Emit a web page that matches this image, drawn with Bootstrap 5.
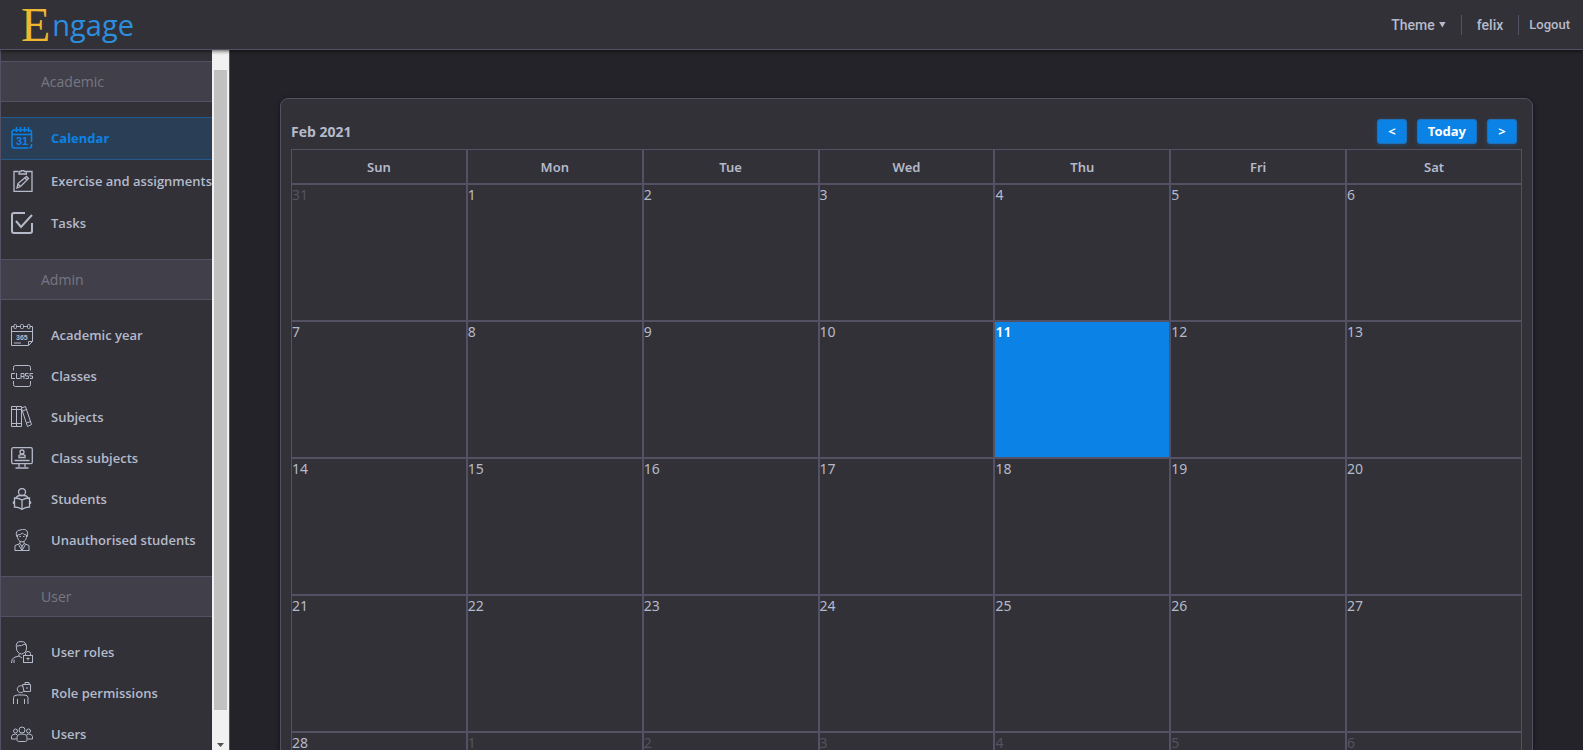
<!DOCTYPE html>
<html lang="en">
<head>
<meta charset="utf-8">
<meta name="viewport" content="width=device-width, initial-scale=1">
<title>Engage</title>
<link href="https://cdn.jsdelivr.net/npm/bootstrap@5.3.0/dist/css/bootstrap.min.css" rel="stylesheet">
<style>
:root{--panel:#323137;--page:#242329;--band:#41404a;--line:#545164;--ink:#b5bacb;--dim:#777782;--blue:#0b82e6}
body{background:var(--page);color:var(--ink);font-family:"Noto Sans",sans-serif;font-size:14px;line-height:20px}
.topbar{height:50px;background:var(--panel);border-bottom:1px solid var(--line);box-shadow:0 1px 4px #000a;z-index:2;padding:0 13px 0 21px}
.brand{height:49px;gap:2px;font-size:29px;line-height:49px;color:#2b8ede;font-family:"Open Sans",sans-serif}
.brand-cap{font-family:"Liberation Serif",serif;font-size:48px;color:#eeb830}
.topbar .acts,.topbar button{font-family:Roboto,sans-serif;font-size:14px;line-height:20px;font-weight:500}
.topbar .acts{gap:15px}
.topbar button,.topbar .acts a{color:var(--ink)}
.topbar .acts .exit{font-size:13px;margin-left:-5px}
.vline{width:1px;height:20px;background:var(--line)}
.caret{width:7px;height:6px;background:currentColor;clip-path:polygon(0 0,100% 0,50% 100%)}
.side{width:230px;background:var(--panel);border:solid var(--line);border-width:0 1px}
.side-body{padding-top:11px;overflow:hidden;width:211px;font-family:"Open Sans",sans-serif}
.side h2{font-size:14px;line-height:39px;font-weight:400;margin:0;padding-left:40px;background:var(--band);border:solid var(--line);border-width:1px 0;color:var(--dim)}
.side ul{padding:15px 0;margin:0}
.side li a{height:41px;padding:0 0 2px 10px;gap:18px;font-size:13px;color:var(--ink);font-weight:600;text-decoration:none;white-space:nowrap}
.side .tall a{height:42px;padding-bottom:0}
.side .tall a.on{height:43px;padding-bottom:1px;background:#2a3f56;border:solid #22598e;border-width:1px 0;color:var(--blue);font-weight:700}
.side svg{width:22px;height:22px;flex:none;fill:none;stroke:currentColor}
.side svg text{fill:currentColor;stroke:none;font-family:"Liberation Sans",sans-serif;font-weight:700}
.rail{width:17px;background:#f1f1f1;padding:20px 2px 0}
.thumb{flex:1;background:#c1c1c1}
.rail .caret{margin:33px 3px 3px;color:#505050;height:4px;flex:none}
main{padding:48px 50px 0;min-width:0}
.sheet{background:var(--panel);border:1px solid var(--line);border-radius:8px;box-shadow:0 1px 5px #0007;padding:20px 10px}
.sheet-head{height:30px;padding-right:5px}
.sheet-head h1{font-family:"Open Sans",sans-serif;font-size:14px;line-height:26px;font-weight:700;margin:0}
.pager{gap:10px}
.pager button{height:25px;min-width:30px;padding:0 10px;font-size:13px;line-height:23px;font-weight:700;color:#fff;background:var(--blue);border:1px solid #216fb5;border-radius:3px;box-shadow:0 1px 4px #0b82e655}
.month{table-layout:fixed;border-collapse:separate;border-spacing:0}
.month th,.month td{border:1px solid var(--line)}
.month th{height:35px;text-align:center;font-weight:600;font-size:13px}
.month td{height:137px;vertical-align:top;padding:0}
.month .off{color:#54535f}
.month .now{background:var(--blue);color:#fff;font-weight:600}
</style>
</head>
<body class="vh-100 overflow-hidden d-flex flex-column">
<header class="topbar d-flex align-items-center justify-content-between position-relative flex-shrink-0">
  <a href="#" class="brand text-decoration-none d-flex" aria-label="Engage"><span class="brand-cap">E</span><span>ngage</span></a>
  <div class="acts d-flex align-items-center">
    <button type="button" class="btn p-0 border-0 d-flex align-items-center gap-1">Theme <span class="caret"></span></button>
    <span class="vline"></span><a href="#" class="text-decoration-none">felix</a>
    <span class="vline"></span><a href="#" class="exit text-decoration-none">Logout</a>
  </div>
</header>
<div class="d-flex flex-grow-1 overflow-hidden">
<nav class="side d-flex flex-shrink-0" aria-label="Main menu">
  <div class="side-body">
    <h2>Academic</h2>
    <ul class="list-unstyled tall">
      <li><a href="#" class="on d-flex align-items-center"><svg viewBox="0 0 22 22" stroke-width="1.5"><path d="M20.500 15V5.500Q20.500 3 18 3H3.500Q1 3 1 5.500V18.500Q1 21 3.500 21H17.500M20.500 17v1.500Q20.500 21 18.500 21M1 7.500h19.500M5.500 0v5M9.500 0v5M13.500 0v5M17.500 0v5"/><text x="5" y="18" font-size="11">31</text></svg>Calendar</a></li>
      <li><a href="#" class="d-flex align-items-center"><svg viewBox="0 0 22 22" stroke-width="1.3"><path d="M7 1.500H3v20h18v-20h-5M8 4V1.500h2q0-1 1.700-1t1.700 1h2V4zM6 18l1-4.500 8.500-7 2 2-8 8zM14 8l2 2M7 14l2 2"/></svg>Exercise and assignments</a></li>
      <li><a href="#" class="d-flex align-items-center"><svg viewBox="0 0 22 22"><path stroke-width="2" d="M14 1H3Q1 1 1 3v16q0 2 2 2h16q2 0 2-2v-8M5 9l5 6L21 3"/></svg>Tasks</a></li>
    </ul>
    <h2>Admin</h2>
    <ul class="list-unstyled">
      <li><a href="#" class="d-flex align-items-center"><svg viewBox="0 0 22 22"><path d="M3 2.500H.5v19h17l4-4v-15H19M5.500 2.500h4M12.500 2.500h4M.5 7.500h21M17.500 21.500v-4h4M3 19h7"/><rect x="3" y=".5" width="2.500" height="4" rx="1"/><rect x="9.500" y=".5" width="3" height="4" rx="1"/><rect x="16.500" y=".5" width="2.500" height="4" rx="1"/><text x="5" y="16" font-size="7">365</text></svg>Academic year</a></li>
      <li><a href="#" class="d-flex align-items-center"><svg viewBox="0 0 22 22"><path d="M2.500 5.500V2.500q0-2 2-2h13q2 0 2 2v3M2.500 16v3.500q0 2 2 2h13q2 0 2-2V16M4 8.500H.5v5H4M5.500 8v5.500H9M10 14V8.500h3V14M10 11.500h3M17.500 8.500h-3V11h3v2.500h-3M22 8.500h-3V11h2.500v2.500H19"/></svg>Classes</a></li>
      <li><a href="#" class="d-flex align-items-center"><svg viewBox="0 0 22 22"><path d="M.5.5h5v20h-5zM5.500.5h5v20h-5zM.5 3.500h10M.5 17.500h10M10.500 2l4-1.500 6 18-4 2-6-18M11.500 5l4-1.500M15.500 17l4-1.500"/></svg>Subjects</a></li>
      <li><a href="#" class="d-flex align-items-center"><svg viewBox="0 0 22 22" stroke-width="1.3"><rect x=".7" y=".7" width="20.600" height="16" rx="1.500"/><path d="M3.500 13.500h15M8 17v3M14 17v3M4.500 21h13M8 10.500V8.500l2-1h2l2 1v2z"/><circle cx="11" cy="5" r="2"/></svg>Class subjects</a></li>
      <li><a href="#" class="d-flex align-items-center"><svg viewBox="0 0 22 22" stroke-width="1.3"><circle cx="11" cy="4" r="3.500"/><path d="M11 12q-3-2-7.500-2v9q4.500 0 7.500 2.500 3-2.500 7.500-2.500v-9q-4.500 0-7.500 2zv9M5 10q1-2.500 4-2.500h4q3 0 4 2.500M3.500 13Q1 15 3.500 16M18.500 13q2.500 2 0 3"/></svg>Students</a></li>
      <li><a href="#" class="d-flex align-items-center"><svg viewBox="0 0 22 22"><path d="M6 8Q3.500 1.500 9 1q6-2 7.500 2 .5 3-.5 5M6.500 6Q6 12 11 13q5-1 4.500-7-3 0-4-2-2 2-5 2M9 12v2.500l-5 2V22M13 12v2.500l5 2V22M4 21.500h14M9 14.500l2 3 2-3M7.500 15.500l3.500 6 3.500-6M11 17v5M8.500 7.500h1.500M12 7.500h1.500"/></svg>Unauthorised students</a></li>
    </ul>
    <h2>User</h2>
    <ul class="list-unstyled">
      <li><a href="#" class="d-flex align-items-center"><svg viewBox="0 0 22 22"><path d="M5.500 7Q4 .5 10 .5T15.500 7q0 5-5 6-5-1-5-6M6 5q5 0 8-2l1.500 2M8 13v2l-5 1.500Q.5 17.500.5 22M3 18.500V22M8 15l3 2M14.500 14v-1.500q0-2 2.500-2t2.500 2V14"/><rect x="12.500" y="14.500" width="9" height="7"/><path d="M17 16.500v3M15.500 17.500h3"/></svg>User roles</a></li>
      <li><a href="#" class="d-flex align-items-center"><svg viewBox="0 0 22 22"><path d="M13 8.500a3.500 3.500 0 1 1-1-4M2.500 22v-6.500q0-2.500 4-2.500h6.500q4 0 4 2.500V22M6.500 17v5M13.500 17v5M14 2.500v-2h4v2M11.500 2.500h8v7H13zM16 5v2"/></svg>Role permissions</a></li>
      <li><a href="#" class="d-flex align-items-center"><svg viewBox="0 0 22 22"><circle cx="11" cy="7" r="3"/><circle cx="4.500" cy="8" r="2"/><circle cx="17.500" cy="8" r="2"/><path d="M6 17.500v-3Q6 11 11 11t5 3.500v3l-1.500 1h-7zM5.500 16H.5v-2.500Q1 11 4.500 11l2 1M16.500 16h5v-2.500Q21 11 17.500 11l-2 1"/></svg>Users</a></li>
    </ul>
  </div>
  <div class="rail d-flex flex-column flex-shrink-0" aria-hidden="true"><div class="thumb"></div><span class="caret"></span></div>
</nav>
<main class="flex-grow-1">
  <section class="sheet">
    <div class="sheet-head d-flex justify-content-between align-items-start">
      <h1>Feb 2021</h1>
      <div class="pager d-flex"><button type="button" aria-label="Previous month">&lt;</button><button type="button">Today</button><button type="button" aria-label="Next month">&gt;</button></div>
    </div>
    <table class="month w-100">
      <thead><tr><th>Sun</th><th>Mon</th><th>Tue</th><th>Wed</th><th>Thu</th><th>Fri</th><th>Sat</th></tr></thead>
      <tbody>
        <tr><td class="off">31</td><td>1</td><td>2</td><td>3</td><td>4</td><td>5</td><td>6</td></tr>
        <tr><td>7</td><td>8</td><td>9</td><td>10</td><td class="now">11</td><td>12</td><td>13</td></tr>
        <tr><td>14</td><td>15</td><td>16</td><td>17</td><td>18</td><td>19</td><td>20</td></tr>
        <tr><td>21</td><td>22</td><td>23</td><td>24</td><td>25</td><td>26</td><td>27</td></tr>
        <tr><td>28</td><td class="off">1</td><td class="off">2</td><td class="off">3</td><td class="off">4</td><td class="off">5</td><td class="off">6</td></tr>
      </tbody>
    </table>
  </section>
</main>
</div>
<script src="https://cdn.jsdelivr.net/npm/bootstrap@5.3.0/dist/js/bootstrap.bundle.min.js"></script>
</body>
</html>
